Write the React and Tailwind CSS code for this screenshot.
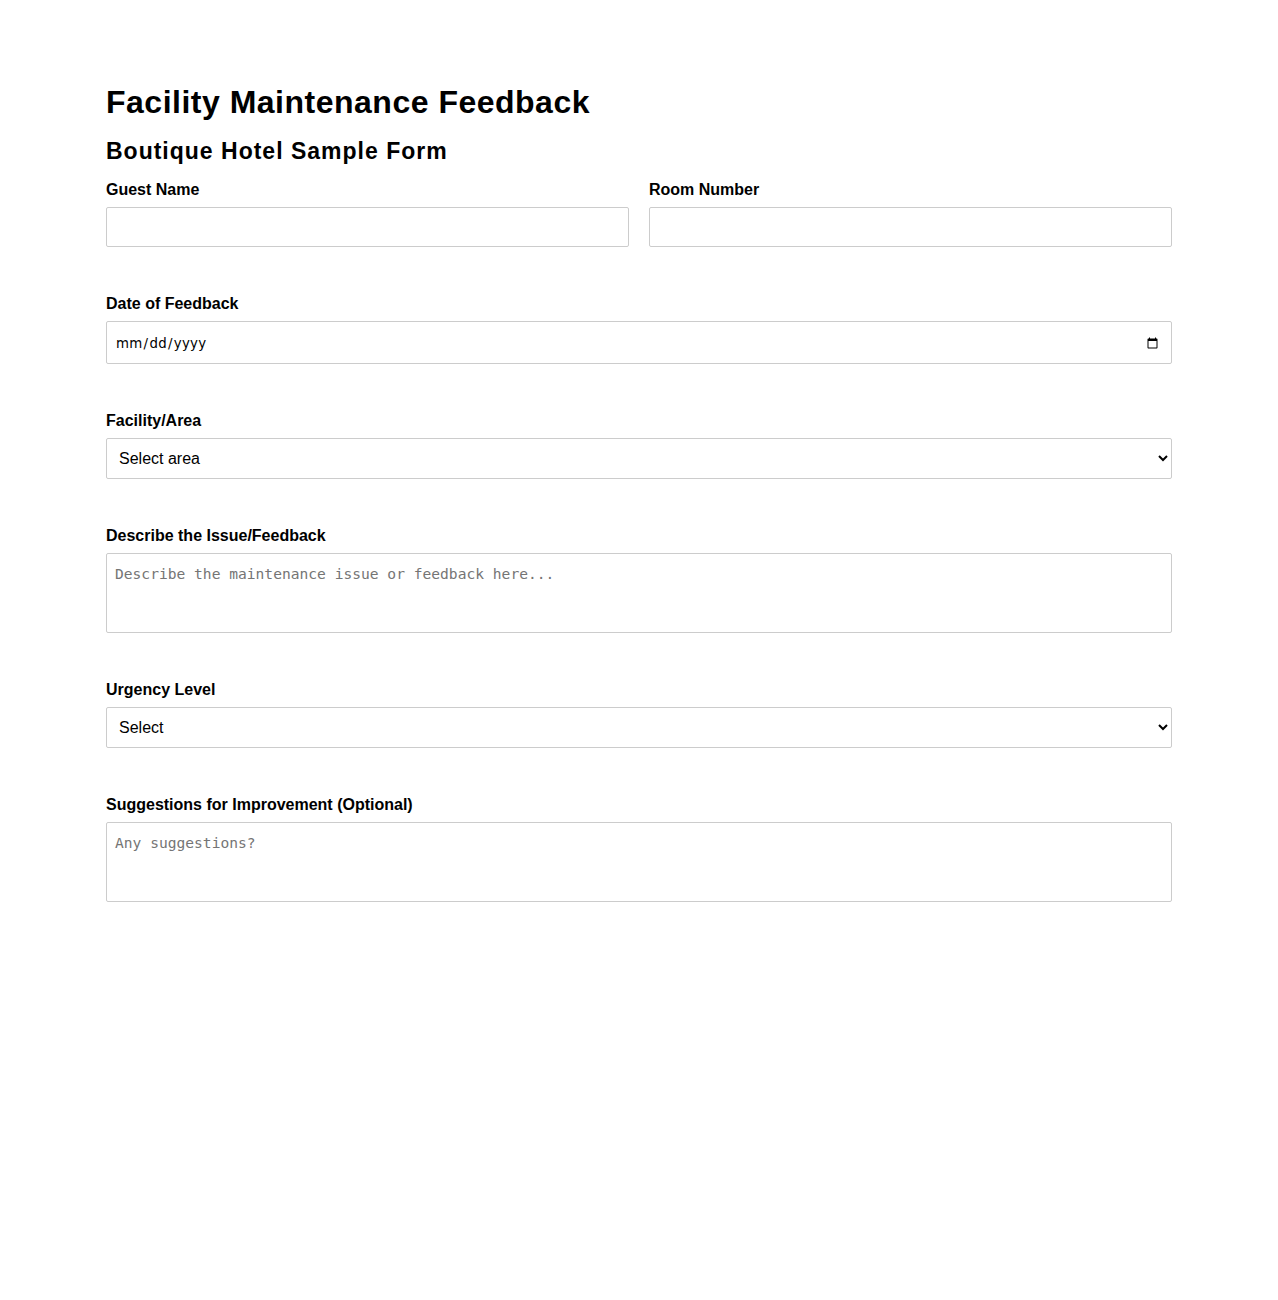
import { useState } from "react";

const labelCls =
  "block mb-[8px] text-[16px] leading-[19px] font-bold text-black";
const boxCls =
  "block w-full border border-[#cccccc] bg-white rounded-[2px] outline-none";

function Field({ label, children }) {
  return (
    <div className="flex flex-col">
      <label className={labelCls}>{label}</label>
      {children}
    </div>
  );
}

export default function App() {
  const [form, setForm] = useState({
    guest: "",
    room: "",
    date: "",
    area: "",
    issue: "",
    urgency: "",
    suggestions: "",
  });

  const set = (key) => (e) => setForm({ ...form, [key]: e.target.value });

  return (
    <div
      className="min-h-[1300px] bg-white text-black"
      style={{ fontFamily: '"Liberation Sans", Arial, sans-serif' }}
    >
      <div className="max-w-[1066px] mx-auto pt-[84px]">
        <h1 className="text-[32px] leading-[37px] font-bold tracking-[0.5px]">
          Facility Maintenance Feedback
        </h1>
        <h2 className="mt-[18px] text-[23px] leading-[25px] font-bold tracking-[1px]">
          Boutique Hotel Sample Form
        </h2>

        <form className="mt-4 flex flex-col gap-[47px]">
          <div className="grid grid-cols-2 gap-5">
            <Field label="Guest Name">
              <input
                type="text"
                value={form.guest}
                onChange={set("guest")}
                className={boxCls + " h-10 px-2 text-[16px]"}
              />
            </Field>
            <Field label="Room Number">
              <input
                type="text"
                value={form.room}
                onChange={set("room")}
                className={boxCls + " h-10 px-2 text-[16px]"}
              />
            </Field>
          </div>

          <Field label="Date of Feedback">
            <input
              type="date"
              value={form.date}
              onChange={set("date")}
              className={
                boxCls +
                " h-[43px] pl-[8px] pr-[10px] pt-[2px] text-[13.33px] tracking-[0.3px] font-['DejaVu_Sans',sans-serif]"
              }
            />
          </Field>

          <Field label="Facility/Area">
            <select
              value={form.area}
              onChange={set("area")}
              className={boxCls + " h-[41px] pl-[8px] pr-[6px] text-[16px]"}
            >
              <option value="">Select area</option>
              <option>Guest Room</option>
              <option>Lobby</option>
              <option>Restaurant</option>
              <option>Pool</option>
              <option>Spa</option>
              <option>Gym</option>
            </select>
          </Field>

          <Field label="Describe the Issue/Feedback">
            <textarea
              value={form.issue}
              onChange={set("issue")}
              placeholder="Describe the maintenance issue or feedback here..."
              className={
                boxCls +
                " h-20 px-2 pt-[11px] resize-none text-[14.6px] leading-[17px] placeholder:text-[#757575] font-['DejaVu_Sans_Mono',monospace]"
              }
            />
          </Field>

          <Field label="Urgency Level">
            <select
              value={form.urgency}
              onChange={set("urgency")}
              className={boxCls + " h-[41px] pl-[8px] pr-[6px] text-[16px]"}
            >
              <option value="">Select</option>
              <option>Low</option>
              <option>Medium</option>
              <option>High</option>
              <option>Urgent</option>
            </select>
          </Field>

          <Field label="Suggestions for Improvement (Optional)">
            <textarea
              value={form.suggestions}
              onChange={set("suggestions")}
              placeholder="Any suggestions?"
              className={
                boxCls +
                " h-20 px-2 pt-[11px] resize-none text-[14.6px] leading-[17px] placeholder:text-[#757575] font-['DejaVu_Sans_Mono',monospace]"
              }
            />
          </Field>
        </form>
      </div>
    </div>
  );
}
